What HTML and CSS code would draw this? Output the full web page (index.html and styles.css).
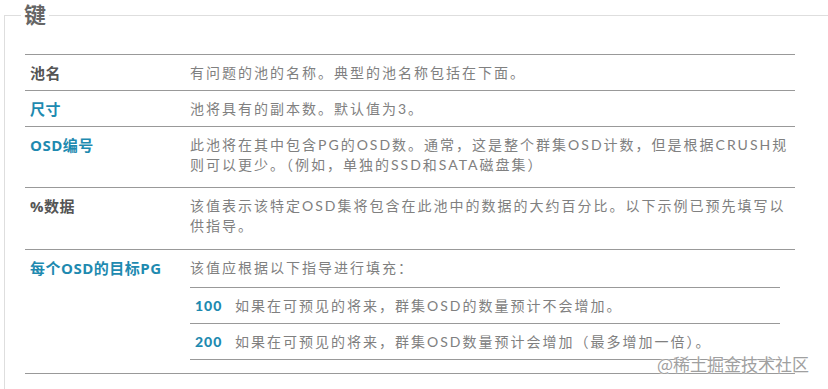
FILE: index.html
```html
<!DOCTYPE html>
<html lang="zh">
<head>
<meta charset="utf-8">
<link rel="stylesheet" href="styles.css">
</head>
<body>
<fieldset class="key">
  <legend class="key-title">键</legend>
  <table class="key-table">
    <colgroup><col class="col-name"><col></colgroup>
    <tr>
      <td class="name dark">池名</td>
      <td class="desc">有问题的池的名称。典型的池名称包括在下面。</td>
    </tr>
    <tr>
      <td class="name">尺寸</td>
      <td class="desc">池将具有的副本数。默认值为3。</td>
    </tr>
    <tr>
      <td class="name">OSD编号</td>
      <td class="desc tall">此池将在其中包含PG的OSD数。通常，这是整个群集OSD计数，但是根据CRUSH规则可以更少。（例如，单独的SSD和SATA磁盘集）</td>
    </tr>
    <tr>
      <td class="name dark">%数据</td>
      <td class="desc taller">该值表示该特定OSD集将包含在此池中的数据的大约百分比。以下示例已预先填写以供指导。</td>
    </tr>
    <tr>
      <td class="name last">每个OSD的目标PG</td>
      <td class="desc last">该值应根据以下指导进行填充：
        <table class="sub-table">
          <colgroup><col class="col-num"><col></colgroup>
          <tr>
            <td class="num">100</td>
            <td class="sub-desc">如果在可预见的将来，群集OSD的数量预计不会增加。</td>
          </tr>
          <tr>
            <td class="num">200</td>
            <td class="sub-desc">如果在可预见的将来，群集OSD数量预计会增加（最多增加一倍）。</td>
          </tr>
        </table>
      </td>
    </tr>
  </table>
</fieldset>
<div class="watermark">@稀土掘金技术社区</div>
</body>
</html>
```
FILE: styles.css
```css
html, body {
  margin: 0;
  padding: 0;
  overflow: hidden;
  background: #fff;
  height: 389px;
}
body {
  position: relative;
  font-family: Lato, "Noto Sans CJK SC", sans-serif;
}
.key {
  margin: 0 0 0 4px;
  padding: 0 20px 0 20px;
  width: 900px;
  min-height: 400px;
  border: 1px solid #dedede;
  box-sizing: border-box;
}
.key-title {
  padding: 0 3px;
  margin-left: -4px;
  font-size: 22px;
  line-height: 30px;
  font-weight: bold;
  color: #666;
}
.key-table {
  margin-top: 24px;
  width: 770px;
  border-collapse: collapse;
  table-layout: fixed;
  border-bottom: 1px solid #999;
}
.col-name { width: 165px; }
.key-table > tbody > tr > td {
  border-top: 1px solid #999;
  vertical-align: top;
  padding: 8px 0 7px 0;
  line-height: 20px;
}
.name {
  padding-left: 5px !important;
  font-family: "Open Sans", "Noto Sans CJK SC", sans-serif;
  font-size: 15px;
  font-weight: bold;
  color: #1e8ab0;
  letter-spacing: 0.5px;
}
.name.dark { color: #555; }
.desc {
  font-size: 14px;
  color: #808080;
  letter-spacing: 2px;
}
.key-table > tbody > tr > td.tall { padding-bottom: 12px; }
.key-table > tbody > tr > td.taller { padding-bottom: 13px; }
.key-table > tbody > tr > td.last { padding-bottom: 13px; }
.sub-table {
  margin-top: 9px;
  width: 590px;
  border-collapse: collapse;
  table-layout: fixed;
  border-bottom: 1px solid #999;
}
.col-num { width: 45px; }
.sub-table td {
  border-top: 1px solid #999;
  padding: 8px 0 7px 0;
  line-height: 20px;
}
.num {
  padding-left: 5px !important;
  font-size: 14px;
  font-weight: 900;
  color: #1e8ab0;
  letter-spacing: 1px;
}
.sub-desc {
  font-size: 14px;
  color: #808080;
  letter-spacing: 2px;
}
.watermark {
  position: absolute;
  left: 657px;
  top: 353px;
  font-size: 17px;
  line-height: 22px;
  color: #a0a0a0;
  font-family: "Noto Sans CJK SC", sans-serif;
  text-shadow: 0 0 1px #fff, 0 0 2px #fff;
}
```
